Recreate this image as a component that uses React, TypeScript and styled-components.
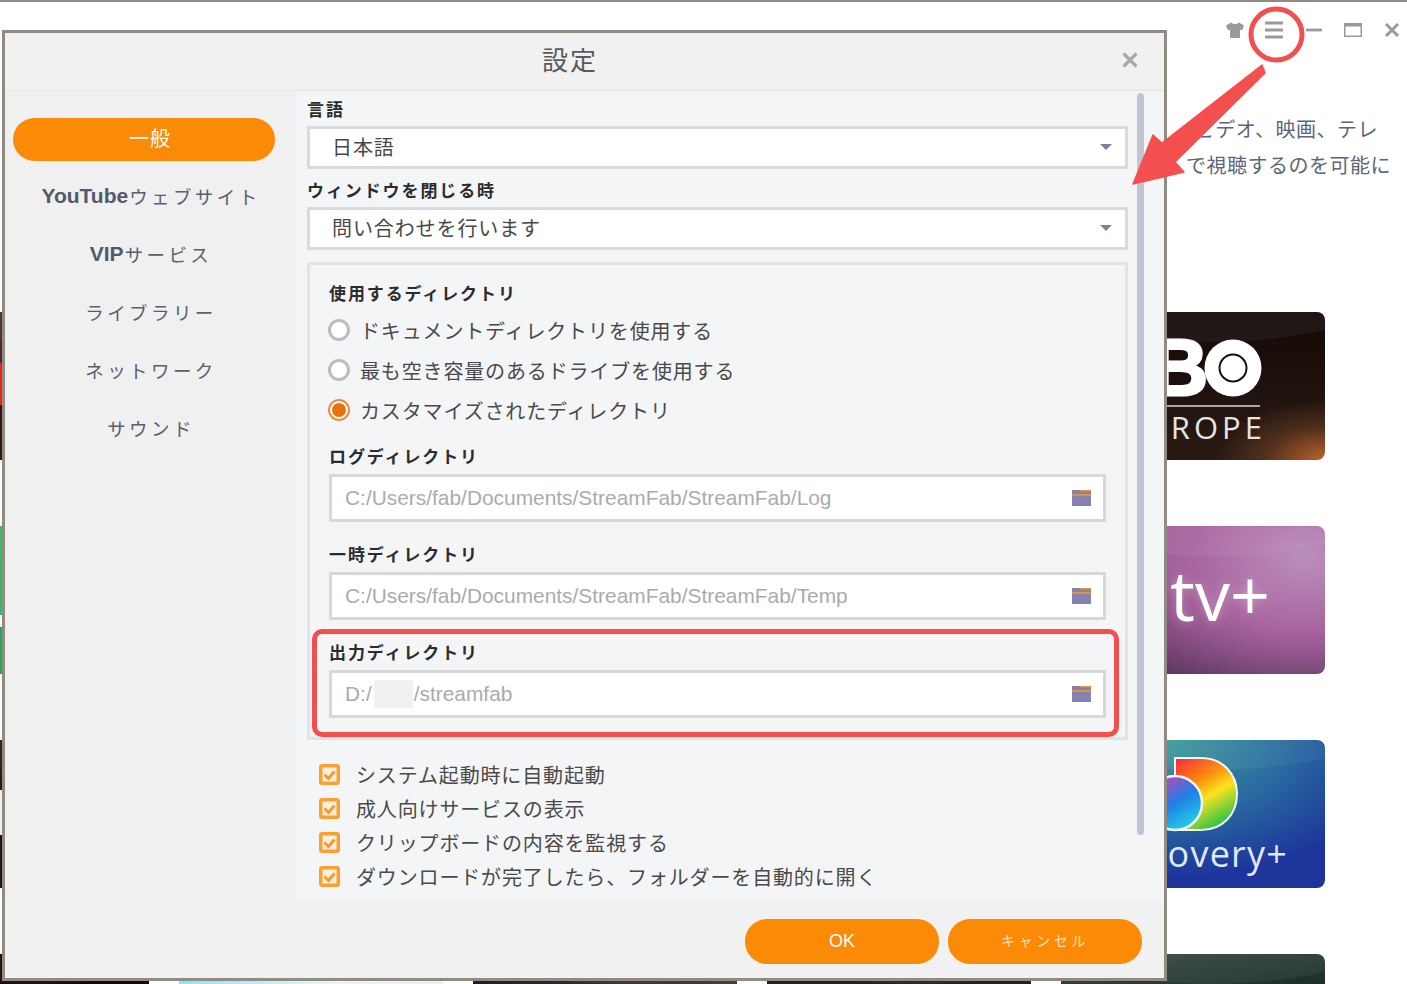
import React from "react";
import styled, { createGlobalStyle } from "styled-components";

const JP = `"Liberation Sans", "Noto Sans CJK JP", sans-serif`;

const Global = createGlobalStyle`
  html, body { margin: 0; padding: 0; background: #fff; }
  body { font-family: ${JP}; overflow: hidden; }
  * { box-sizing: border-box; }
`;

const Page = styled.div`
  position: relative;
  width: 1407px;
  height: 984px;
  overflow: hidden;
  background: #fff;
  border-top: 2px solid #928b82;
`;

const TopBar = styled.div`
  height: 56px;
  display: flex;
  justify-content: flex-end;
  align-items: center;
  gap: 19.25px;
  padding-right: 5px;
`;

const WinIcon = styled.svg`
  width: 20px;
  height: 20px;
  display: block;
  color: #9a9a9a;
`;

const Intro = styled.div`
  margin-top: 54px;
  text-align: right;
  font-size: 20px;
  line-height: 36px;
  letter-spacing: 0.5px;
  color: #5d6675;
`;

const IntroLine = styled.div<{ $end: number }>`
  padding-right: ${(p) => p.$end}px;
  white-space: nowrap;
`;

const CardGrid = styled.div`
  margin: 128px 0 0 -115px;
  display: grid;
  grid-template-columns: repeat(5, 264px);
  grid-auto-rows: 148px;
  column-gap: 30px;
  row-gap: 66px;
`;

const Card = styled.div<{ $bg: string }>`
  position: relative;
  overflow: hidden;
  border-radius: 8px;
  background: ${(p) => p.$bg};
  &::before {
    content: "";
    position: absolute;
    left: -60px;
    top: -120px;
    width: 420px;
    height: 150px;
    border-radius: 50%;
    background: rgba(255, 255, 255, 0.05);
  }
`;

const HboCard = styled(Card)`
  display: flex;
  flex-direction: column;
  align-items: flex-end;
  padding: 23px 62px 0 0;
`;

const HboMark = styled.div`
  display: flex;
  align-items: center;
  height: 66px;
`;

const HboLetters = styled.span`
  font: 700 80px/66px "Liberation Sans", sans-serif;
  color: #fff;
  -webkit-text-stroke: 3px #fff;
  margin-right: -5px;
`;

const HboRule = styled.div`
  width: 160px;
  height: 2px;
  margin: 4px 3px 0 0;
  background: #a9a7a6;
`;

const HboRegion = styled.div`
  margin: 1px -3px 0 0;
  font: 400 31px/38px "Open Sans", sans-serif;
  letter-spacing: 4px;
  color: #e6e4e2;
`;

const TvCard = styled(Card)`
  display: flex;
  align-items: center;
  justify-content: flex-end;
  padding: 0 55px 0 0;
`;

const TvMark = styled.span`
  font: 500 70px/1 "Open Sans", sans-serif;
  color: #fff;
  margin-top: -12px;
  text-shadow: 0 0 12px rgba(255, 255, 255, 0.35);
`;

const DiscoveryCard = styled(Card)`
  display: flex;
  flex-direction: column;
  align-items: flex-end;
  padding: 16px 38px 0 0;
`;

const DiscoveryMark = styled.svg`
  width: 100px;
  height: 76px;
  margin-right: 48px;
  display: block;
`;

const DiscoveryName = styled.span`
  font: 500 36px/44px "Open Sans", sans-serif;
  letter-spacing: 1.2px;
  margin-right: -1px;
  color: #dfe8f5;
`;

const Dialog = styled.div`
  position: absolute;
  left: 2px;
  top: 28px;
  width: 1165px;
  height: 951px;
  border: 3px solid #928b82;
  background: #f1f1f1;
  display: flex;
  flex-direction: column;
`;

const DialogHeader = styled.header`
  height: 58px;
  flex: none;
  display: flex;
  align-items: center;
  justify-content: center;
  position: relative;
  padding: 0 29px 6px 0;
  border-bottom: 1px solid #e5e5e6;
`;

const DialogTitle = styled.h1`
  margin: 0;
  font-size: 26px;
  font-weight: 400;
  letter-spacing: 2px;
  color: #5a5a5a;
`;

const CloseGlyph = styled.svg`
  position: absolute;
  right: 25px;
  top: 18px;
  width: 18px;
  height: 18px;
`;

const DialogBody = styled.div`
  flex: 1;
  min-height: 0;
  display: flex;
`;

const Sidebar = styled.nav`
  width: 291px;
  flex: none;
  background: #f0f0f0;
  padding: 27px 0 0 8px;
  display: flex;
  flex-direction: column;
`;

const NavActive = styled.div`
  width: 262px;
  height: 43px;
  border-radius: 22px;
  background: #fb8a06;
  color: #fff;
  font-size: 20px;
  line-height: 43px;
  letter-spacing: 1px;
  text-align: center;
  padding-left: 12px;
  margin-bottom: 6px;
`;

const NavItem = styled.div`
  width: 276px;
  height: 58px;
  display: flex;
  align-items: center;
  justify-content: center;
  font-size: 18.5px;
  letter-spacing: 3.4px;
  color: #59606e;
`;

const NavLatin = styled.b`
  font-size: 21px;
  letter-spacing: 0;
  margin-right: 1px;
  color: #515a6b;
`;

const Content = styled.div`
  flex: 1;
  min-width: 0;
  background: #f4f5f7;
  display: flex;
`;

const Form = styled.div`
  width: 842px;
  flex: none;
  padding: 7px 0 0 11px;
`;

const Scrollbar = styled.div`
  width: 7px;
  height: 742px;
  margin: 2px 0 0 -1px;
  border-radius: 4px;
  background: #c3c4d3;
`;

const FieldLabel = styled.div`
  height: 24px;
  line-height: 26px;
  font-size: 17px;
  font-weight: 700;
  letter-spacing: 1.9px;
  color: #2c2c2c;
  margin-bottom: 4px;
`;

const SelectBox = styled.div`
  width: 821px;
  height: 43px;
  background: #fff;
  border: 3px solid #dadada;
  display: flex;
  align-items: center;
  justify-content: space-between;
  padding: 0 13px 2px 22px;
  font-size: 20px;
  letter-spacing: 0.9px;
  color: #484848;
  margin-bottom: 10px;
`;

const Caret = styled.span`
  width: 0;
  height: 0;
  border-left: 6px solid transparent;
  border-right: 6px solid transparent;
  border-top: 6px solid #76859b;
`;

const Group = styled.section`
  width: 821px;
  margin-top: 12px;
  border: 3px solid #e1e3e6;
  padding: 16px 19px 19px 19px;
`;

const GroupHeading = styled(FieldLabel)`
  line-height: 28px;
  margin-bottom: 5px;
`;

const RadioRow = styled.label`
  height: 40px;
  display: flex;
  align-items: center;
  gap: 10px;
  margin-left: -1px;
  font-size: 20px;
  letter-spacing: 0.85px;
  color: #4a4a4a;
  white-space: nowrap;
`;

const RadioDot = styled.span<{ $on?: boolean }>`
  width: 22px;
  height: 22px;
  flex: none;
  border-radius: 50%;
  background: #fff;
  border: ${(p) => (p.$on ? "2px solid #f08c3a" : "3px solid #bcbcbc")};
  display: flex;
  align-items: center;
  justify-content: center;
  &::after {
    content: "";
    width: 14px;
    height: 14px;
    border-radius: 50%;
    background: ${(p) => (p.$on ? "#e8720c" : "transparent")};
  }
`;

const DirList = styled.div`
  margin-top: 14px;
  display: flex;
  flex-direction: column;
  gap: 20px;
`;

const DirField = styled.div``;

const DirLabel = styled(FieldLabel)`
  line-height: 28px;
  margin-bottom: 6px;
`;

const DirInput = styled.div`
  width: 777px;
  height: 48px;
  background: #fff;
  border: 3px solid #d8d8d8;
  display: flex;
  align-items: center;
  padding: 0 12px 0 13px;
  font-size: 20.9px;
  color: #aaabad;
  white-space: nowrap;
`;

const Masked = styled.span`
  width: 39px;
  height: 28px;
  margin: 0 1px 0 2px;
  background: #f1f1f1;
  flex: none;
`;

const FolderGlyph = styled.svg`
  width: 19px;
  height: 16px;
  margin-left: auto;
  flex: none;
`;

const CheckList = styled.div`
  margin-top: 17px;
  padding-left: 12px;
`;

const CheckRow = styled.label`
  height: 34px;
  display: flex;
  align-items: center;
  gap: 16px;
  font-size: 20px;
  letter-spacing: 0.85px;
  color: #4a4a4a;
  white-space: nowrap;
`;

const CheckBox = styled.svg`
  width: 21px;
  height: 21px;
  flex: none;
`;

const Footer = styled.footer`
  height: 77px;
  flex: none;
  background: #f1f1f1;
  display: flex;
  justify-content: flex-end;
  align-items: flex-start;
  gap: 9px;
  padding: 18px 22px 0 0;
`;

const FooterButton = styled.button<{ $small?: boolean }>`
  width: 194px;
  height: 45px;
  border: 0;
  border-radius: 22px;
  background: #fb8a06;
  color: ${(p) => (p.$small ? "#fde0b8" : "#fff")};
  font-family: ${JP};
  font-size: ${(p) => (p.$small ? "14px" : "18px")};
  letter-spacing: ${(p) => (p.$small ? "3.6px" : "0")};
  padding: 0 0 ${(p) => (p.$small ? "4px" : "0")};
`;

const Highlight = styled.div`
  position: absolute;
  left: 312px;
  top: 627px;
  width: 807px;
  height: 108px;
  border: 5px solid #f44f4f;
  border-radius: 10px;
  pointer-events: none;
`;

const Annotation = styled.svg`
  position: absolute;
  left: 0;
  top: -2px;
  width: 1407px;
  height: 984px;
  pointer-events: none;
`;

const Folder = () => (
  <FolderGlyph viewBox="0 0 19 16">
    <rect width="19" height="16" fill="#8781b0" />
    <rect x="8" width="11" height="1.5" fill="#d9963f" />
    <rect y="4" width="19" height="2" fill="#d9963f" />
  </FolderGlyph>
);

const Check = () => (
  <CheckBox viewBox="0 0 21 21">
    <rect x="1.75" y="1.75" width="17.5" height="17.5" rx="1.5" fill="#fbeedd" stroke="#f8a032" strokeWidth="3.5" />
    <polyline points="5.5,10.5 9.5,14.5 15.5,7.5" fill="none" stroke="#f49a35" strokeWidth="3" />
  </CheckBox>
);

const navItems: [string, string][] = [
  ["YouTube", "ウェブサイト"],
  ["VIP", "サービス"],
  ["", "ライブラリー"],
  ["", "ネットワーク"],
  ["", "サウンド"],
];

const options = [
  { text: "システム起動時に自動起動" },
  { text: "成人向けサービスの表示" },
  { text: "クリップボードの内容を監視する" },
  { text: "ダウンロードが完了したら、フォルダーを自動的に開く" },
];

const plain = "#fff";

export default function App() {
  return (
    <Page>
      <Global />
      <TopBar>
        <WinIcon viewBox="0 0 20 20">
          <path d="M6 2.5 L1 5.5 L3 10.5 L5 9.5 V18 H15 V9.5 L17 10.5 L19 5.5 L14 2.5 Q10 6 6 2.5 Z" fill="currentColor" />
        </WinIcon>
        <WinIcon viewBox="0 0 20 20">
          <path d="M1 3 H19 M1 10 H19 M1 17 H19" stroke="currentColor" strokeWidth="2.8" fill="none" />
        </WinIcon>
        <WinIcon viewBox="0 0 20 20">
          <path d="M2 10 H18" stroke="currentColor" strokeWidth="2.8" fill="none" />
        </WinIcon>
        <WinIcon viewBox="0 0 20 20">
          <rect x="1.75" y="3.75" width="16.5" height="12.5" fill="none" stroke="currentColor" strokeWidth="1.5" />
          <rect x="1" y="3" width="18" height="3.5" fill="currentColor" />
        </WinIcon>
        <WinIcon viewBox="0 0 20 20">
          <path d="M4 4 L16 16 M16 4 L4 16" stroke="currentColor" strokeWidth="3" fill="none" />
        </WinIcon>
      </TopBar>

      <Intro>
        <IntroLine $end={29}>ビデオ、映画、テレ</IntroLine>
        <IntroLine $end={16}>で視聴するのを可能に</IntroLine>
      </Intro>

      <CardGrid>
        <Card $bg="linear-gradient(180deg,#4a2a30 0,#4a2a30 51px,#e8281c 51px,#e8281c 93px,#33151c 93px,#33151c 100%)" />
        <Card $bg="#222" />
        <Card $bg="#333" />
        <Card $bg="#444" />
        <HboCard $bg="radial-gradient(110px 60px at 100% 100%, #b9622c 0, rgba(120,70,40,.5) 55%, transparent 100%), radial-gradient(90px 50px at 0 100%, #2a6473 0, transparent 100%), linear-gradient(180deg,#140906,#2a1a14)">
          <HboMark>
            <HboLetters>HB</HboLetters>
            <svg width="60" height="60" viewBox="0 0 60 60">
              <circle cx="30" cy="30" r="28.5" fill="#fff" />
              <circle cx="30" cy="30" r="13.5" fill="#fff" stroke="#1a0f0c" strokeWidth="2" />
            </svg>
          </HboMark>
          <HboRule />
          <HboRegion>EUROPE</HboRegion>
        </HboCard>

        <Card $bg={`linear-gradient(180deg,#2dbb6d 0,#2dbb6d 89px,${plain} 89px,${plain} 101px,#1fa75e 101px,#1fa75e 100%)`} />
        <Card $bg="#556" />
        <Card $bg="#667" />
        <Card $bg="#778" />
        <TvCard $bg="radial-gradient(220px 140px at 92% 22%, #bb8ebb 0, #a9659f 50%, rgba(130,60,120,0) 100%), linear-gradient(180deg,#9a5f97 0,#7b3d78 55%,#5f3a60 100%)">
          <TvMark>tv+</TvMark>
        </TvCard>

        <Card $bg="linear-gradient(180deg,#2a1a1a 0,#2a1a1a 50px,#f1f1f1 50px,#f1f1f1 95px,#1e1418 95px,#1e1418 100%)" />
        <Card $bg="#889" />
        <Card $bg="#99a" />
        <Card $bg="#aab" />
        <DiscoveryCard $bg="radial-gradient(240px 140px at 38% 0, #3f9e9a 0, #2a6ea0 50%, #1d349b 100%)">
          <DiscoveryMark viewBox="0 0 100 76">
            <defs>
              <linearGradient id="dRainbow" x1="0.1" y1="0" x2="0.6" y2="1">
                <stop offset="0" stopColor="#f5262e" />
                <stop offset="0.35" stopColor="#fb8b0c" />
                <stop offset="0.6" stopColor="#fbe31c" />
                <stop offset="1" stopColor="#28c24a" />
              </linearGradient>
              <linearGradient id="dBall" x1="0.2" y1="0" x2="0.8" y2="1">
                <stop offset="0" stopColor="#c744b0" />
                <stop offset="0.5" stopColor="#1f7fe8" />
                <stop offset="1" stopColor="#22dde0" />
              </linearGradient>
            </defs>
            <path d="M36 2 H62 C84 2 98 18 98 38 C98 58 84 74 62 74 H36 Z" fill="url(#dRainbow)" stroke="#f1f6f8" strokeWidth="2" />
            <circle cx="36" cy="47" r="27" fill="url(#dBall)" stroke="#f1f6f8" strokeWidth="2.5" />
          </DiscoveryMark>
          <DiscoveryName>discovery+</DiscoveryName>
        </DiscoveryCard>

        <Card $bg="#1a0606" />
        <Card $bg="linear-gradient(90deg,#8fe3f2,#e6f7fb 60%,#eeeef6)" />
        <Card $bg="linear-gradient(90deg,#1e1c2e,#4a3c38)" />
        <Card $bg="#222024" />
        <Card $bg="linear-gradient(170deg,#3a4d47,#15241f 50%)" />
      </CardGrid>

      <Dialog>
        <DialogHeader>
          <DialogTitle>設定</DialogTitle>
          <CloseGlyph viewBox="0 0 18 18">
            <path d="M2.5 2.5 L15.5 15.5 M15.5 2.5 L2.5 15.5" stroke="#a9a9a9" strokeWidth="3.2" fill="none" />
          </CloseGlyph>
        </DialogHeader>
        <DialogBody>
          <Sidebar>
            <NavActive>一般</NavActive>
            {navItems.map(([latin, jp]) => (
              <NavItem key={jp}>
                {latin && <NavLatin>{latin}</NavLatin>}
                <span>{jp}</span>
              </NavItem>
            ))}
          </Sidebar>
          <Content>
            <Form>
              <FieldLabel>言語</FieldLabel>
              <SelectBox>
                日本語
                <Caret />
              </SelectBox>
              <FieldLabel>ウィンドウを閉じる時</FieldLabel>
              <SelectBox>
                問い合わせを行います
                <Caret />
              </SelectBox>
              <Group>
                <GroupHeading>使用するディレクトリ</GroupHeading>
                <RadioRow>
                  <RadioDot />
                  ドキュメントディレクトリを使用する
                </RadioRow>
                <RadioRow>
                  <RadioDot />
                  最も空き容量のあるドライブを使用する
                </RadioRow>
                <RadioRow>
                  <RadioDot $on />
                  カスタマイズされたディレクトリ
                </RadioRow>
                <DirList>
                  <DirField>
                    <DirLabel>ログディレクトリ</DirLabel>
                    <DirInput>
                      C:/Users/fab/Documents/StreamFab/StreamFab/Log
                      <Folder />
                    </DirInput>
                  </DirField>
                  <DirField>
                    <DirLabel>一時ディレクトリ</DirLabel>
                    <DirInput>
                      C:/Users/fab/Documents/StreamFab/StreamFab/Temp
                      <Folder />
                    </DirInput>
                  </DirField>
                  <DirField>
                    <DirLabel>出力ディレクトリ</DirLabel>
                    <DirInput>
                      D:/
                      <Masked />
                      /streamfab
                      <Folder />
                    </DirInput>
                  </DirField>
                </DirList>
              </Group>
              <CheckList>
                {options.map((o) => (
                  <CheckRow key={o.text}>
                    <Check />
                    {o.text}
                  </CheckRow>
                ))}
              </CheckList>
            </Form>
            <Scrollbar />
          </Content>
        </DialogBody>
        <Footer>
          <FooterButton>OK</FooterButton>
          <FooterButton $small>キャンセル</FooterButton>
        </Footer>
      </Dialog>

      <Highlight />
      <Annotation viewBox="0 0 1407 984">
        <circle cx="1276.5" cy="34.5" r="25.5" fill="none" stroke="#f44f4f" strokeWidth="5" />
        <path
          d="M1262 65 L1265 73 L1175 162 L1184 172 L1133 184 L1153 135 L1162 143 Z"
          fill="#f44f4f"
          stroke="#f44f4f"
          strokeWidth="1.5"
          strokeLinejoin="round"
        />
      </Annotation>
    </Page>
  );
}
